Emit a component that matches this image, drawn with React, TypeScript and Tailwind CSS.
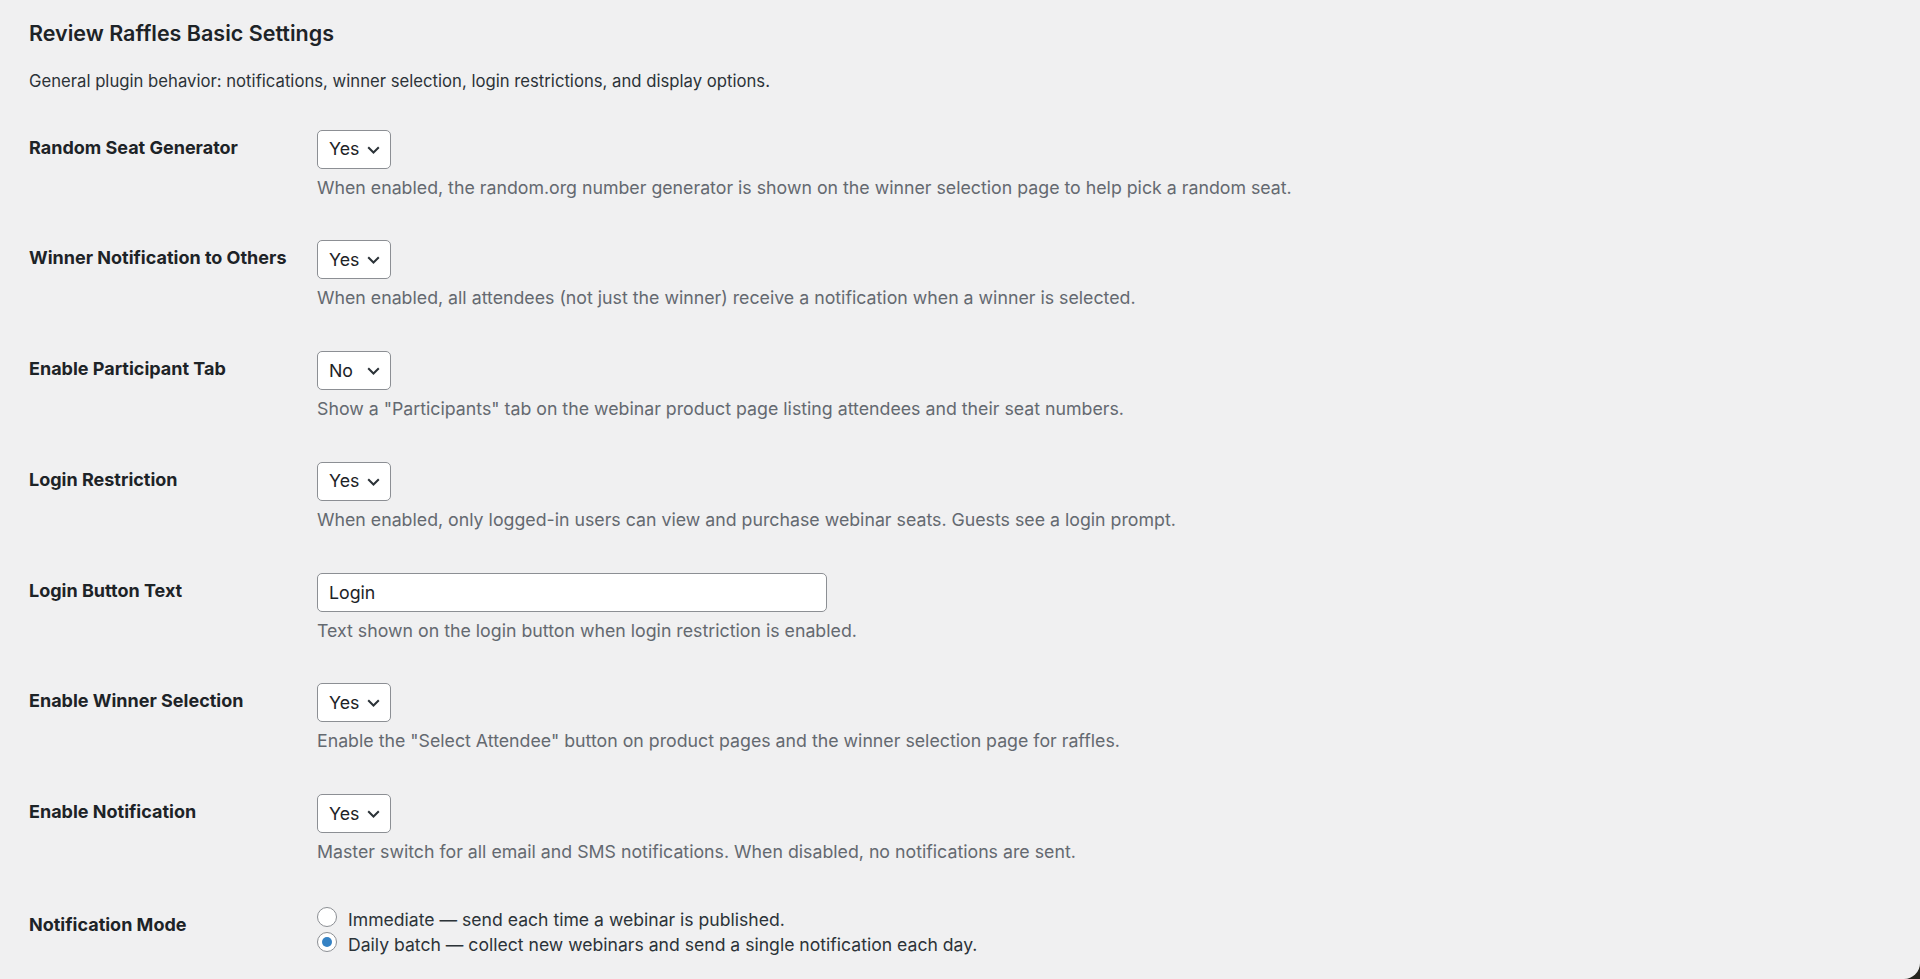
import React, { useState } from 'react';

type Row = {
  id: string;
  label: string;
  kind: 'select' | 'text';
  value: string;
  help: string;
};

const rows: Row[] = [
  {
    id: 'random_seat',
    label: 'Random Seat Generator',
    kind: 'select',
    value: 'Yes',
    help: 'When enabled, the random.org number generator is shown on the winner selection page to help pick a random seat.',
  },
  {
    id: 'notify_others',
    label: 'Winner Notification to Others',
    kind: 'select',
    value: 'Yes',
    help: 'When enabled, all attendees (not just the winner) receive a notification when a winner is selected.',
  },
  {
    id: 'participant_tab',
    label: 'Enable Participant Tab',
    kind: 'select',
    value: 'No',
    help: 'Show a "Participants" tab on the webinar product page listing attendees and their seat numbers.',
  },
  {
    id: 'login_restriction',
    label: 'Login Restriction',
    kind: 'select',
    value: 'Yes',
    help: 'When enabled, only logged-in users can view and purchase webinar seats. Guests see a login prompt.',
  },
  {
    id: 'login_button_text',
    label: 'Login Button Text',
    kind: 'text',
    value: 'Login',
    help: 'Text shown on the login button when login restriction is enabled.',
  },
  {
    id: 'winner_selection',
    label: 'Enable Winner Selection',
    kind: 'select',
    value: 'Yes',
    help: 'Enable the "Select Attendee" button on product pages and the winner selection page for raffles.',
  },
  {
    id: 'notification',
    label: 'Enable Notification',
    kind: 'select',
    value: 'Yes',
    help: 'Master switch for all email and SMS notifications. When disabled, no notifications are sent.',
  },
];

const modes = [
  { id: 'immediate', text: 'Immediate — send each time a webinar is published.' },
  { id: 'daily', text: 'Daily batch — collect new webinars and send a single notification each day.' },
];

const YesNoSelect = ({ value }: { value: string }) => (
  <div className="relative h-[39px] w-[74px]">
    <select
      defaultValue={value}
      className="h-full w-full appearance-none rounded-[5px] border border-[#8c8f94] bg-white pl-[11px] text-[17.75px] leading-[24px] text-[#1d2327] outline-none"
    >
      <option>Yes</option>
      <option>No</option>
    </select>
    {/* chevron sits over the select */}
    <svg
      className="pointer-events-none absolute right-[11px] top-[16px] h-[8px] w-[13px]"
      viewBox="0 0 13 8"
      fill="none"
    >
      <path d="M1.2 1.2l5.3 5.3 5.3-5.3" stroke="#2c3338" strokeWidth="2" />
    </svg>
  </div>
);

const Radio = ({ checked }: { checked: boolean }) => (
  <span className="flex h-[20px] w-[20px] shrink-0 items-center justify-center rounded-full border border-[#8c8f94] bg-white">
    {checked && <span className="h-[10px] w-[10px] rounded-full bg-[#3582c4]" />}
  </span>
);

export default function App() {
  const [mode, setMode] = useState('daily');

  return (
    <div className="min-h-screen bg-[#25251f] font-['Inter',sans-serif]">
      <div className="h-[979px] overflow-hidden rounded-br-[16px] bg-[#f0f0f1] pl-[29px] pt-[19px] text-[#1d2327]">
        <h2 className="text-[21.5px] font-semibold leading-[28px]">Review Raffles Basic Settings</h2>
        <p className="mt-[22px] text-[16.7px] leading-[24px] text-[#2c3338]">
          General plugin behavior: notifications, winner selection, login restrictions, and display options.
        </p>

        <div className="mt-[16.5px] flex flex-col">
          {rows.map((row) => (
            <div key={row.id} className="flex pb-[20.75px] pt-[20px]">
              <div className="w-[288px] shrink-0 pt-[6px] text-[18px] font-bold leading-[24px]">{row.label}</div>
              <div className="flex flex-col items-start">
                {row.kind === 'select' ? (
                  <YesNoSelect value={row.value} />
                ) : (
                  <input
                    type="text"
                    defaultValue={row.value}
                    className="h-[39px] w-[510px] rounded-[5px] border border-[#8c8f94] bg-white px-[11px] text-[17.75px] leading-[24px] text-[#1d2327] outline-none"
                  />
                )}
                <p className="mt-[7px] text-[17.75px] leading-[24px] text-[#646970]">{row.help}</p>
              </div>
            </div>
          ))}

          <div className="flex pt-[20px]">
            <div className="w-[288px] shrink-0 pt-[8.5px] text-[18px] font-bold leading-[24px]">Notification Mode</div>
            <fieldset className="mt-[2px] flex flex-col">
              {modes.map((m) => (
                <label
                  key={m.id}
                  className="flex cursor-pointer items-start gap-[11px] text-[17.6px] leading-[25px] text-[#2c3338]"
                  onClick={() => setMode(m.id)}
                >
                  <Radio checked={mode === m.id} />
                  <span>{m.text}</span>
                </label>
              ))}
            </fieldset>
          </div>
        </div>
      </div>
    </div>
  );
}
